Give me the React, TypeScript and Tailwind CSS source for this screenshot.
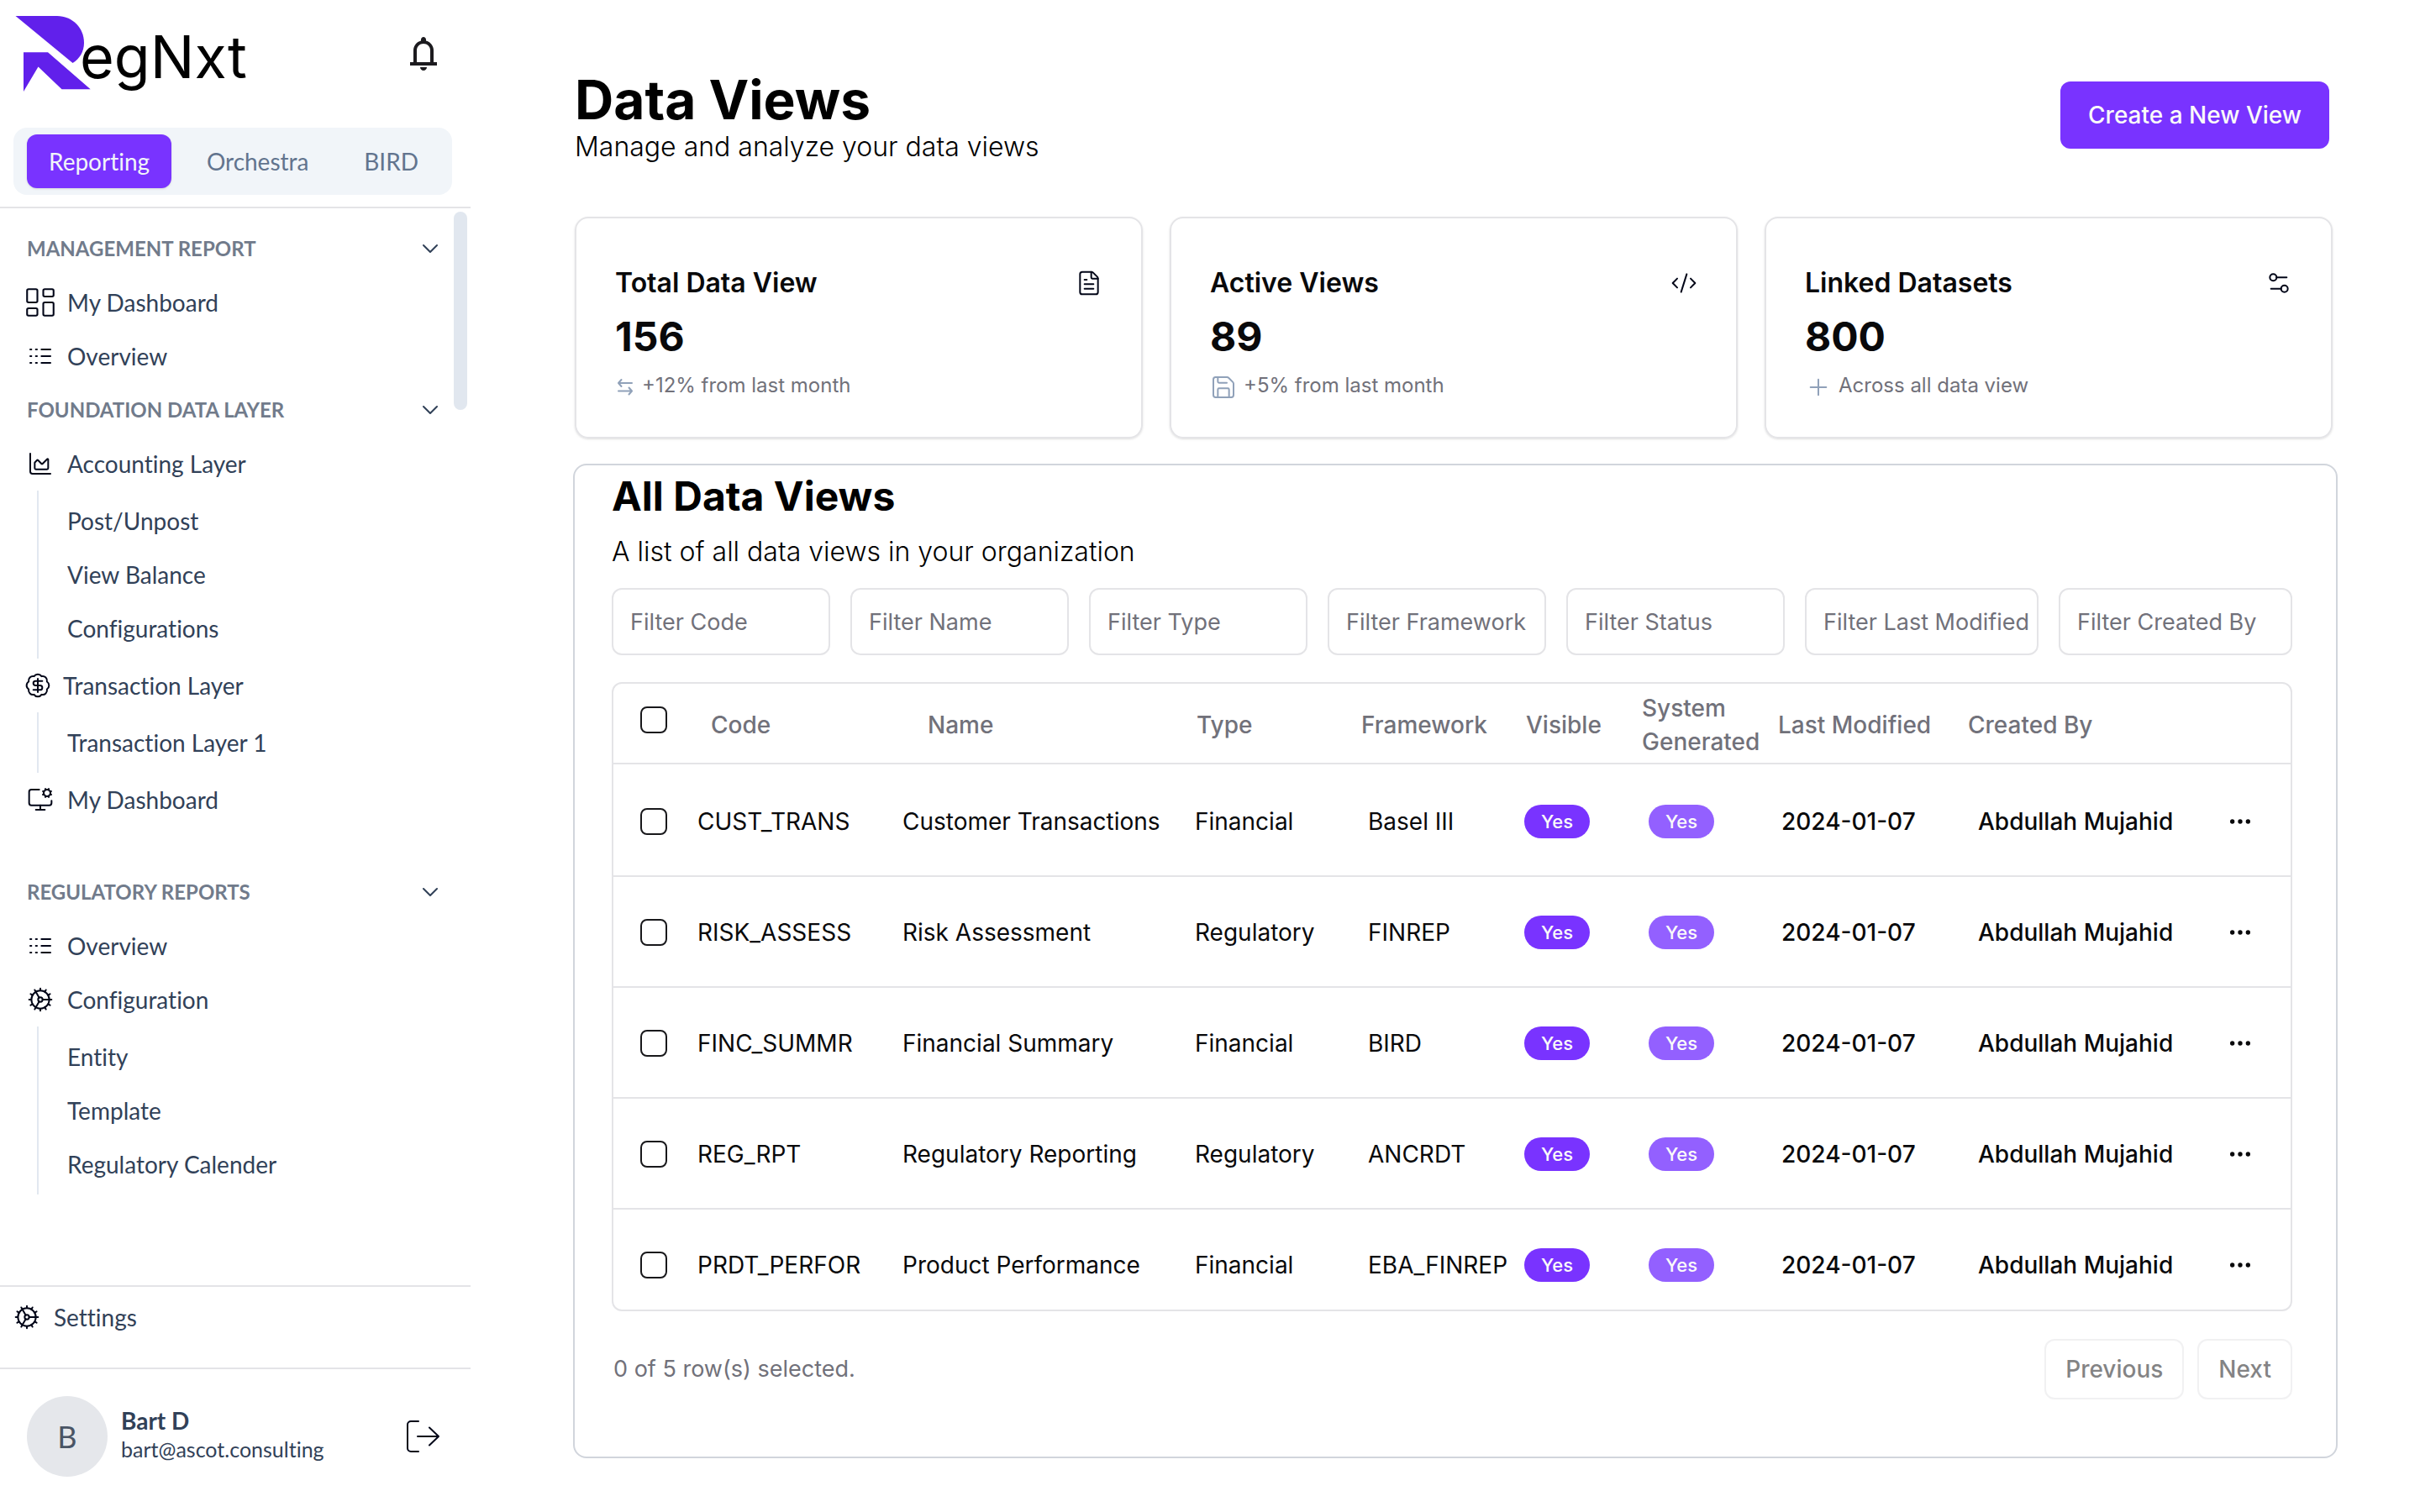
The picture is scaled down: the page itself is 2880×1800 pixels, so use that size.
import type { ComponentType, ReactNode } from "react";
import {
  BadgeDollarSign,
  ChartArea,
  ChevronDown,
  CodeXml,
  Cog,
  Ellipsis,
  FileText,
  LayoutDashboard,
  MonitorCog,
  Plus,
  Save,
  Settings2,
} from "lucide-react";

/* ---------- icons ---------- */

function LogoMark() {
  return (
    <svg viewBox="18 19 90 90" className="h-[90px] w-[90px] shrink-0 fill-[#6120eb]" aria-hidden="true">
      <path d="M18.5 19H68C86 19 100 33 100 51C100 61 95 70 86.500 75Z" />
      <path d="M28 62.300H57L107.700 106.300H73.500L45.500 79.500L28 109Z" />
    </svg>
  );
}

function BellIcon() {
  return (
    <svg viewBox="0 0 24 24" className="size-12 fill-[#1c1b1f]" aria-hidden="true">
      <path d="M4 19V17H6V10C6 8.617 6.417 7.388 7.25 6.313C8.083 5.238 9.167 4.533 10.5 4.2V3.5C10.5 3.083 10.646 2.729 10.938 2.438C11.229 2.146 11.583 2 12 2C12.417 2 12.771 2.146 13.063 2.438C13.354 2.729 13.5 3.083 13.5 3.5V4.2C14.833 4.533 15.917 5.238 16.75 6.313C17.583 7.388 18 8.617 18 10V17H20V19H4ZM12 22C11.45 22 10.979 21.804 10.588 21.413C10.196 21.021 10 20.55 10 20H14C14 20.55 13.804 21.021 13.413 21.413C13.021 21.804 12.55 22 12 22ZM8 17H16V10C16 8.9 15.608 7.958 14.825 7.175C14.042 6.392 13.1 6 12 6C10.9 6 9.958 6.392 9.175 7.175C8.392 7.958 8 8.9 8 10V17Z" />
    </svg>
  );
}

function ListIcon() {
  return (
    <svg viewBox="0 0 24 24" fill="none" stroke="currentColor" strokeWidth="1.5" strokeLinecap="round" className="size-8 shrink-0" aria-hidden="true">
      <path d="M3 6h1M3 12h1M3 18h1M8 6h1M8 12h1M8 18h1M13 6h8M13 12h8M13 18h8" />
    </svg>
  );
}

function SwapIcon() {
  return (
    <svg viewBox="0 0 24 24" fill="none" stroke="currentColor" strokeWidth="2" strokeLinecap="round" strokeLinejoin="round" className="size-6" aria-hidden="true">
      <path d="M20 7H4M7.500 3L4 7L7.500 11M4 16.500H20M16.500 12.500L20 16.500L16.500 20.500" />
    </svg>
  );
}

function LogoutIcon() {
  return (
    <svg viewBox="0 0 40 40" fill="none" stroke="currentColor" strokeWidth="2" strokeLinecap="round" strokeLinejoin="round" className="size-10" aria-hidden="true">
      <path d="M14 2H5a4 4 0 0 0-4 4v28a4 4 0 0 0 4 4h9M13 20h25M27 9.500L38 20L27 30.500" />
    </svg>
  );
}

const DashboardIcon = () => <LayoutDashboard className="size-[42px] shrink-0" strokeWidth={1.2} />;
const AccountingIcon = () => <ChartArea className="size-8 shrink-0" strokeWidth={1.5} />;
const TransactionIcon = () => <BadgeDollarSign className="size-8 shrink-0" strokeWidth={1.5} />;
const MonitorIcon = () => <MonitorCog className="size-8 shrink-0" strokeWidth={1.5} />;
const GearIcon = () => <Cog className="size-8 shrink-0" strokeWidth={1.5} />;

/* ---------- sidebar ---------- */

type NavItem = { label: string; icon: ComponentType; children?: string[]; indent?: string };

const managementReport: NavItem[] = [
  { label: "My Dashboard", icon: DashboardIcon },
  { label: "Overview", icon: ListIcon },
];

const foundationLayer: NavItem[] = [
  { label: "Accounting Layer", icon: AccountingIcon, children: ["Post/Unpost", "View Balance", "Configurations"] },
  { label: "Transaction Layer", icon: TransactionIcon, children: ["Transaction Layer 1"], indent: "gap-[14px] pl-[29px]" },
  { label: "My Dashboard", icon: MonitorIcon },
];

const regulatoryReports: NavItem[] = [
  { label: "Overview", icon: ListIcon },
  { label: "Configuration", icon: GearIcon, children: ["Entity", "Template", "Regulatory Calender"] },
];

function NavLink({ label, icon: Icon, indent = "gap-4 pl-8" }: NavItem) {
  return (
    <a href="#" className={`flex h-16 items-center ${indent}`}>
      <span className="flex w-8 shrink-0 items-center justify-center text-slate-950">
        <Icon />
      </span>
      {label}
    </a>
  );
}

function NavGroup({ title, items }: { title: string; items: NavItem[] }) {
  return (
    <section>
      <button type="button" className="flex h-16 w-full items-center justify-between pl-8 text-2xl font-bold text-[#717b8b]">
        {title}
        <ChevronDown className="size-8 text-slate-700" strokeWidth={1.5} />
      </button>
      {items.map((item) => (
        <div key={item.label}>
          <NavLink {...item} />
          {item.children && (
            <div className="ml-11 border-l-2 border-slate-200 py-1">
              {item.children.map((child) => (
                <a key={child} href="#" className="flex h-16 items-center pl-[34px]">
                  {child}
                </a>
              ))}
            </div>
          )}
        </div>
      ))}
    </section>
  );
}

function Sidebar() {
  return (
    <aside className="flex w-[560px] shrink-0 flex-col font-['Lato',sans-serif] text-[28px] leading-10 text-slate-700 [font-variant-ligatures:none]">
      <div className="border-b-2 border-[#e4e4e7] pb-[14px]">
        <div className="mb-6 flex h-32 items-center justify-between pr-8 pl-[18px]">
          <a href="#" aria-label="RegNxt" className="flex items-center">
            <LogoMark />
            <span className="mt-2 -ml-[13px] font-['Inter',sans-serif] text-[70px] leading-none text-black">egNxt</span>
          </a>
          <button type="button" aria-label="Notifications">
            <BellIcon />
          </button>
        </div>
        <div role="tablist" className="mr-[22px] ml-4 flex h-20 items-center justify-between rounded-2xl bg-slate-100 px-4 text-slate-500">
          <button type="button" role="tab" aria-selected="true" className="h-16 rounded-xl bg-[#7933ff] px-[26px] text-slate-100 shadow-sm">
            Reporting
          </button>
          <button type="button" role="tab" aria-selected="false" className="h-16 px-6">
            Orchestra
          </button>
          <button type="button" role="tab" aria-selected="false" className="h-16 px-6">
            BIRD
          </button>
        </div>
      </div>

      <div className="flex flex-1 items-start">
        <nav className="w-[528px] pt-4">
          <NavGroup title="MANAGEMENT REPORT" items={managementReport} />
          <NavGroup title="FOUNDATION DATA LAYER" items={foundationLayer} />
          <div className="mt-[46px]">
            <NavGroup title="REGULATORY REPORTS" items={regulatoryReports} />
          </div>
        </nav>
        <div className="mt-1 ml-3 h-[236px] w-4 rounded-full bg-[#e1e7ef]" />
      </div>

      <div className="border-t-2 border-[#e4e4e7] pt-1 pb-7">
        <NavLink label="Settings" icon={GearIcon} indent="gap-4 pl-4" />
      </div>

      <div className="flex items-center gap-4 border-t-2 border-[#e4e4e7] pt-8 pr-9 pb-[42px] pl-8">
        <div className="flex size-24 items-center justify-center rounded-full bg-gray-200 text-4xl text-gray-600">B</div>
        <div className="flex-1 pb-1">
          <p className="leading-[34px] font-bold">Bart D</p>
          <p className="text-[25px] leading-[34px]">bart@ascot.consulting</p>
        </div>
        <button type="button" aria-label="Log out" className="text-slate-950">
          <LogoutIcon />
        </button>
      </div>
    </aside>
  );
}

/* ---------- main ---------- */

function StatCard({ title, value, note, icon, noteIcon }: { title: string; value: string; note: string; icon: ReactNode; noteIcon: ReactNode }) {
  return (
    <article className="rounded-2xl border-2 border-[#e4e4e7] px-[46px] pt-[57px] pb-[41px] shadow-sm">
      <div className="flex items-center justify-between">
        <h2 className="text-[32px] leading-10 font-semibold">{title}</h2>
        <span className="text-slate-950">{icon}</span>
      </div>
      <p className="mt-4 text-5xl leading-14 font-bold">{value}</p>
      <p className="mt-[14px] flex h-9 items-start gap-2 text-2xl leading-8 text-[#71717a]">
        <span className="flex h-9 items-center text-slate-400">{noteIcon}</span>
        {note}
      </p>
    </article>
  );
}

const filters = [
  "Filter Code",
  "Filter Name",
  "Filter Type",
  "Filter Framework",
  "Filter Status",
  "Filter Last Modified",
  "Filter Created By",
];

const rows = [
  { code: "CUST_TRANS", name: "Customer Transactions", type: "Financial", framework: "Basel III" },
  { code: "RISK_ASSESS", name: "Risk Assessment", type: "Regulatory", framework: "FINREP" },
  { code: "FINC_SUMMR", name: "Financial Summary", type: "Financial", framework: "BIRD" },
  { code: "REG_RPT", name: "Regulatory Reporting", type: "Regulatory", framework: "ANCRDT" },
  { code: "PRDT_PERFOR", name: "Product Performance", type: "Financial", framework: "EBA_FINREP" },
];

function Checkbox({ label }: { label: string }) {
  return (
    <input
      type="checkbox"
      aria-label={label}
      className="block size-8 appearance-none rounded-lg border-2 border-[#18181b] checked:bg-[#7933ff]"
    />
  );
}

function Pill({ tone }: { tone: string }) {
  return <span className={`flex h-10 w-[78px] items-center justify-center rounded-full text-[22px] font-medium text-zinc-50 ${tone}`}>Yes</span>;
}

function DataTable() {
  return (
    <div className="mt-8 rounded-xl border-2 border-[#e4e4e7]">
      <table className="w-full table-fixed border-separate border-spacing-0 text-left text-[28px] leading-10 whitespace-nowrap">
        <colgroup>
          <col className="w-[96px]" />
          <col className="w-[244px]" />
          <col className="w-[348px]" />
          <col className="w-[196px]" />
          <col className="w-[196px]" />
          <col className="w-[138px]" />
          <col className="w-[162px]" />
          <col className="w-[226px]" />
          <col className="w-[304px]" />
          <col className="w-[86px]" />
        </colgroup>
        <thead className="text-[#71717a] [&_th]:h-24 [&_th]:border-b-2 [&_th]:border-[#e4e4e7] [&_th]:font-medium">
          <tr>
            <th className="pb-2 pl-8">
              <Checkbox label="Select all rows" />
            </th>
            <th className="pt-1 pl-5">Code</th>
            <th className="pt-1 pl-[34px]">Name</th>
            <th className="pt-1 pl-[6px]">Type</th>
            <th className="pt-1 pl-[6px]">Framework</th>
            <th className="pt-1 pl-[6px]">Visible</th>
            <th className="pt-[3px] pl-[6px]">
              System
              <br />
              Generated
            </th>
            <th className="pt-1 pl-[6px]">Last Modified</th>
            <th className="pt-1 pl-[6px]">Created By</th>
            <th aria-label="Actions" />
          </tr>
        </thead>
        <tbody className="text-zinc-950 [&_td]:border-[#e4e4e7] [&_td]:align-top">
          {rows.map((row, i) => (
            <tr
              key={row.code}
              className={
                i === 0
                  ? "[&>td]:pt-12 [&>td]:pb-11"
                  : i === rows.length - 1
                    ? "[&>td]:border-t-2 [&>td]:pt-[46px] [&>td]:pb-[33px]"
                    : "[&>td]:border-t-2 [&>td]:pt-[46px] [&>td]:pb-11"
              }
            >
              <td className="pl-8">
                <div className="flex h-10 items-center">
                  <Checkbox label={`Select ${row.code}`} />
                </div>
              </td>
              <td className="pl-1">{row.code}</td>
              <td className="pl-1">{row.name}</td>
              <td className="pl-1">{row.type}</td>
              <td className="pl-[14px]">{row.framework}</td>
              <td className="pl-1">
                <Pill tone="bg-[#7933ff]" />
              </td>
              <td className="pl-[14px]">
                <Pill tone="bg-[#9360ff]" />
              </td>
              <td className="pl-[10px] font-medium">2024-01-07</td>
              <td className="pl-[18px] font-medium">Abdullah Mujahid</td>
              <td className="pl-[10px]">
                <button type="button" aria-label={`Actions for ${row.code}`} className="flex h-10 items-center">
                  <Ellipsis className="size-8" strokeWidth={2} />
                </button>
              </td>
            </tr>
          ))}
        </tbody>
      </table>
    </div>
  );
}

export default function App() {
  return (
    <div className="flex min-h-screen bg-white font-['Inter',sans-serif] text-[#09090b]">
      <Sidebar />
      <main className="min-w-0 flex-1 pt-[87px] pr-[98px] pl-[122px]">
        <header className="flex items-start justify-between pr-[10px] pl-[2px] text-black">
          <div>
            <h1 className="text-[64px] leading-none font-bold">Data Views</h1>
            <p className="mt-1 text-[32px] leading-10 font-light">Manage and analyze your data views</p>
          </div>
          <button type="button" className="mt-[10px] h-20 rounded-xl bg-[#7933ff] px-[33px] text-[28px] font-medium text-zinc-50">
            Create a New View
          </button>
        </header>

        <div className="mt-[63px] mr-[6px] ml-[2px] grid grid-cols-3 gap-8">
          <StatCard
            title="Total Data View"
            value="156"
            note="+12% from last month"
            icon={<FileText className="size-8" strokeWidth={1.5} />}
            noteIcon={<SwapIcon />}
          />
          <StatCard
            title="Active Views"
            value="89"
            note="+5% from last month"
            icon={<CodeXml className="size-8" strokeWidth={1.5} />}
            noteIcon={<Save className="size-8" strokeWidth={1.5} />}
          />
          <StatCard
            title="Linked Datasets"
            value="800"
            note="Across all data view"
            icon={<Settings2 className="size-8" strokeWidth={1.5} />}
            noteIcon={<Plus className="size-8" strokeWidth={1.5} />}
          />
        </div>

        <section className="mt-[30px] rounded-2xl border-2 border-gray-300 pt-[9px] pr-[52px] pb-[68px] pl-11">
          <h2 className="text-5xl leading-14 font-bold text-black">All Data Views</h2>
          <p className="mt-[18px] text-[32px] leading-10 font-light text-black">A list of all data views in your organization</p>

          <div className="mt-[23px] grid grid-cols-[repeat(5,260fr)_repeat(2,278fr)] gap-6">
            {filters.map((label) => (
              <input
                key={label}
                type="text"
                aria-label={label}
                placeholder={label}
                className="h-20 min-w-0 rounded-xl border-2 border-[#e4e4e7] pr-1 pl-5 text-[27px] placeholder:text-[#71717a]"
              />
            ))}
          </div>

          <DataTable />

          <div className="mt-[33px] flex items-center justify-between">
            <p className="pl-[2px] text-[27px] leading-10 text-[#71717a]">0 of 5 row(s) selected.</p>
            <div className="flex gap-4 text-[28px] font-medium">
              <button type="button" disabled className="h-[72px] rounded-xl border-2 border-[#e4e4e7] px-[23px] opacity-50">
                Previous
              </button>
              <button type="button" disabled className="h-[72px] rounded-xl border-2 border-[#e4e4e7] px-[23px] opacity-50">
                Next
              </button>
            </div>
          </div>
        </section>
      </main>
    </div>
  );
}
